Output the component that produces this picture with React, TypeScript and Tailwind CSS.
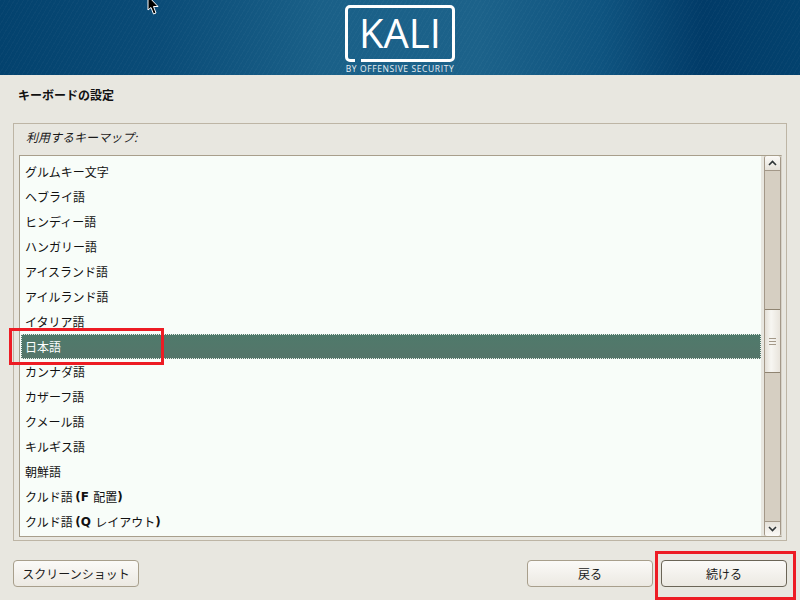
const keymaps = [
  "グルムキー文字",
  "ヘブライ語",
  "ヒンディー語",
  "ハンガリー語",
  "アイスランド語",
  "アイルランド語",
  "イタリア語",
  "日本語",
  "カンナダ語",
  "カザーフ語",
  "クメール語",
  "キルギス語",
  "朝鮮語",
];

const Logo = () => (
  <div className="flex flex-col items-center">
    <svg width="110" height="58" viewBox="0 0 110 58" fill="none">
      <path
        d="M10 55.500H5C3 55.500 1.500 54 1.500 52V5C1.500 3 3 1.500 5 1.500H105C107 1.500 108.500 3 108.500 5V52C108.500 54 107 55.500 105 55.500H16"
        stroke="white"
        strokeWidth="3"
      />
    </svg>
    <div className="absolute top-[4px] left-0 right-0 text-center text-white font-['Open_Sans',sans-serif] font-medium text-[40px] leading-[48px]">
      KALI
    </div>
    <div className="text-[#e8eef2] font-['Open_Sans',sans-serif] text-[8.500px] leading-[9px] mt-[1px] tracking-[0.6px] whitespace-nowrap">
      BY OFFENSIVE SECURITY
    </div>
  </div>
);

const Header = () => (
  <div className="relative h-[75px] flex justify-center pt-[5px] bg-[linear-gradient(90deg,#03426e_0%,#0a4c78_20%,#1a6088_40%,#1c628a_60%,#0f5480_75%,#013b68_88%,#03426e_100%)]">
    <div className="absolute inset-0 bg-[repeating-linear-gradient(120deg,rgba(255,255,255,0.025)_0px,rgba(255,255,255,0.025)_1px,transparent_1px,transparent_4px)]" />
    <div className="relative">
      <Logo />
    </div>
    <svg className="absolute left-[147px] top-0" width="13" height="16" viewBox="0 0 13 16">
      <path d="M1 -4V10L4 7.500L6.500 14L9 13L6.500 6.500H11Z" fill="black" stroke="white" strokeWidth="1" />
    </svg>
  </div>
);

const Scrollbar = () => (
  <div className="w-[17px] flex flex-col bg-[#d6cfc2] border-x border-[#a39888] rounded-[2px]">
    <div className="h-[15px] flex items-center justify-center bg-[linear-gradient(180deg,#fbfaf7,#e5e1d9)] border-b border-[#a39888] rounded-t-[2px]">
      <svg width="9" height="6" viewBox="0 0 9 6" fill="none">
        <path d="M1 5L4.500 1.500L8 5" stroke="#2e3436" strokeWidth="1.600" />
      </svg>
    </div>
    <div className="flex-1 pt-[138px] pb-[148px] flex">
      <div className="flex-1 flex flex-col items-center justify-center gap-[2px] bg-[linear-gradient(90deg,#e3dfd6,#f7f6f2_40%,#e8e4dc)] border-y border-[#8f8471]">
        <div className="w-[7px] h-px bg-[#a39888]" />
        <div className="w-[7px] h-px bg-[#a39888]" />
        <div className="w-[7px] h-px bg-[#a39888]" />
      </div>
    </div>
    <div className="h-[15px] flex items-center justify-center bg-[linear-gradient(180deg,#e5e1d9,#fbfaf7)] border-t border-[#a39888] rounded-b-[2px]">
      <svg width="9" height="6" viewBox="0 0 9 6" fill="none">
        <path d="M1 1L4.500 4.500L8 1" stroke="#2e3436" strokeWidth="1.600" />
      </svg>
    </div>
  </div>
);

const Button = ({ label, dark }: { label: string; dark?: boolean }) => (
  <div
    className={`w-[126px] h-[27px] flex items-center justify-center rounded-[4px] border text-[12px] text-[#1a1a1a] bg-[linear-gradient(180deg,#fbfaf8,#ece9e2)] ${
      dark ? "border-[#6b6557]" : "border-[#a89f8c]"
    }`}
  >
    {label}
  </div>
);

// the latin bits in these two rows come out bold in the installer
const Latin = ({ children }: { children: string }) => (
  <span className="font-['DejaVu_Sans',sans-serif] font-bold">{children}</span>
);

export default function App() {
  return (
    <div className="relative w-[800px] h-[600px] overflow-hidden bg-[#e8e7e0] font-['Noto_Sans_CJK_JP',sans-serif]">
      <Header />
      <div className="pl-[18px] pt-[11px] h-[48px] text-[12px] leading-[17px] font-bold text-[#111]">
        キーボードの設定
      </div>
      <div className="mx-[13px] h-[418px] border border-[#bdb5a5] px-[5px] flex flex-col">
        <div className="h-[31px] pl-[7px] pt-[4px] text-[12px] leading-[17px] italic text-[#1a1a1a]">
          利用するキーマップ:
        </div>
        <div className="h-[382px] w-[763px] border border-[#a89f8c] border-r-[#d6d2c8] flex">
          <div className="flex-1 bg-[#f8fdf9] pt-[3px] text-[12px] text-[#111]">
            {keymaps.map((name) =>
              name === "日本語" ? (
                <div
                  key={name}
                  className="h-[25px] ml-[1px] flex items-center pl-[4px] text-white bg-[linear-gradient(180deg,#4f7a6b,#55756a)] outline-1 -outline-offset-1 outline-dotted outline-[#e8efe9]"
                >
                  {name}
                </div>
              ) : (
                <div key={name} className="h-[25px] flex items-center pl-[5px]">
                  {name}
                </div>
              )
            )}
            <div className="h-[25px] flex items-center pl-[5px] whitespace-pre">
              クルド語 <Latin>(F </Latin>配置<Latin>)</Latin>
            </div>
            <div className="h-[25px] flex items-center pl-[5px] whitespace-pre">
              クルド語 <Latin>(Q </Latin>レイアウト<Latin>)</Latin>
            </div>
          </div>
          <div className="w-[3px] bg-[#e8e7e0]" />
          <Scrollbar />
        </div>
      </div>
      <div className="flex justify-between pl-[13px] pr-[13px] pt-[19px]">
        <Button label="スクリーンショット" />
        <div className="flex gap-[8px]">
          <Button label="戻る" />
          <Button label="続ける" dark />
        </div>
      </div>
      <div className="absolute left-[9px] top-[328px] w-[155px] h-[37px] border-[3px] border-[#ed1c24]" />
      <div className="absolute left-[655px] top-[551px] w-[141px] h-[49px] border-[3px] border-[#ed1c24]" />
    </div>
  );
}
